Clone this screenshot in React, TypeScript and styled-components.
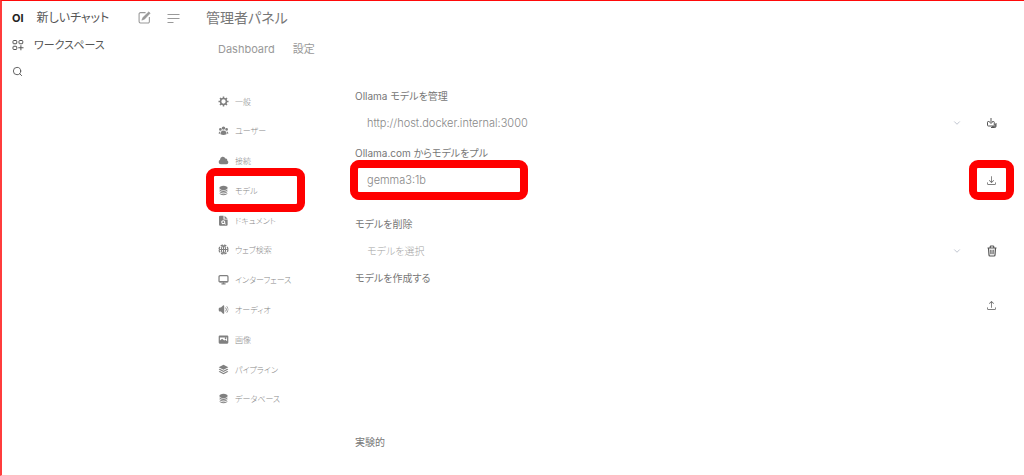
import React from "react";
import styled, { createGlobalStyle } from "styled-components";
import {
  HiArrowDownTray,
  HiArrowUpTray,
  HiCircleStack,
  HiCloud,
  HiSpeakerWave,
  HiUserGroup,
} from "react-icons/hi2";
import { ChevronDown, Search } from "lucide-react";

const GlobalStyle = createGlobalStyle`
  * { box-sizing: border-box; }
  body {
    margin: 0;
    background: #fff;
    font-family: Inter, "Noto Sans CJK JP", sans-serif;
    font-feature-settings: "palt";
    color: #777;
  }
  button, input, select { font: inherit; color: inherit; font-feature-settings: inherit; }
  svg { display: block; flex: none; }
`;

const Page = styled.div`
  display: flex;
  min-height: 100vh;
  border-top: 1px solid #ff0a0a;
  border-left: 2px solid #ff3c3c;
  border-bottom: 1px solid #ffc0c4;
`;

const Sidebar = styled.aside`
  width: 204px;
  flex: none;
  padding: 3px 26px 0 10px;
  font-size: 11px;
  color: #555;
`;

const SideRow = styled.div`
  display: flex;
  align-items: center;
  height: 27px;
`;

const SideLink = styled.a<{ $gap: number; $size: number }>`
  display: flex;
  align-items: center;
  gap: ${(p) => p.$gap}px;
  font-size: ${(p) => p.$size}px;
  line-height: 16px;
  color: inherit;
  text-decoration: none;
  white-space: nowrap;
`;

const Logo = styled.span`
  font-size: 11px;
  font-weight: 700;
  color: #222;
`;

const SideTools = styled.div`
  display: flex;
  gap: 16px;
  margin-left: auto;
  color: #999;
`;

const IconButton = styled.button`
  display: flex;
  align-items: center;
  justify-content: center;
  padding: 0;
  border: 0;
  background: none;
`;

const Main = styled.main`
  flex: 1;
  min-width: 0;
`;

const Title = styled.h1`
  margin: 0;
  padding-top: 5px;
  font-size: 14px;
  line-height: 24px;
  font-weight: 400;
  color: #777;
`;

const Tabs = styled.nav`
  display: flex;
  gap: 18px;
  padding: 9px 12px 0;
  font-size: 11px;
  line-height: 20px;

  a { color: #999; text-decoration: none; }
`;

const Body = styled.div`
  display: flex;
  padding: 28px 10px 0 12px;
`;

const SettingsNav = styled.nav`
  display: flex;
  flex-direction: column;
  justify-content: space-between;
  width: 137px;
  flex: none;
  padding: 4px 0 42px;
`;

const NavLink = styled.a`
  position: relative;
  display: flex;
  align-items: center;
  gap: 6px;
  height: 20px;
  width: 72px;
  font-size: 8px;
  font-weight: 300;
  white-space: nowrap;
  color: #888;
  text-decoration: none;

  svg { color: #808080; }
`;

const Highlight = styled.span<{ $block: number; $left: number; $right: number }>`
  position: absolute;
  top: ${(p) => -p.$block}px;
  bottom: ${(p) => -p.$block}px;
  left: ${(p) => -p.$left}px;
  right: ${(p) => -p.$right}px;
  border: 8px solid #ff0000;
  border-radius: 9px;
  pointer-events: none;
`;

const Form = styled.form`
  flex: 1;
  min-width: 0;
  font-size: 11px;
`;

const Field = styled.div<{ $after: number }>`
  margin-bottom: ${(p) => p.$after}px;
`;

const Label = styled.label`
  display: block;
  font-size: 10px;
  line-height: 18px;
  color: #777;
`;

const SectionTitle = styled.h2`
  margin: 0;
  font-size: 10px;
  font-weight: 400;
  line-height: 18px;
  color: #777;
`;

const Control = styled.div`
  display: flex;
  align-items: center;
  height: 36px;
`;

const SelectBox = styled.div`
  display: flex;
  align-items: center;
  flex: 1;
  margin-right: 7px;

  svg { color: #b4bac6; margin-left: -10px; pointer-events: none; }
`;

const Select = styled.select<{ $empty?: boolean }>`
  appearance: none;
  flex: 1;
  min-width: 0;
  height: 24px;
  padding: 0 12px;
  border: 0;
  background: transparent;
  font-size: ${(p) => (p.$empty ? 10 : 11)}px;
  font-weight: 300;
  color: ${(p) => (p.$empty ? "#a4a4a4" : "#888")};
`;

const InputBox = styled.div`
  position: relative;
  width: 168px;
  margin-right: auto;
`;

const Input = styled.input`
  display: block;
  width: 100%;
  height: 24px;
  padding: 0 12px;
  border: 0;
  outline: 0;
  background: transparent;
  font-weight: 300;
  color: #888;
`;

const ActionButton = styled(IconButton)`
  position: relative;
  width: 45px;
  height: 24px;
  margin-left: auto;
  flex: none;
  color: #555;
`;

const EditIcon = () => (
  <svg width="13" height="13" viewBox="0 0 24 24" fill="none" stroke="currentColor" strokeWidth="2">
    <path d="M14 3H4.500A2.500 2.500 0 0 0 2 5.500v14A2.500 2.500 0 0 0 4.500 22h14a2.500 2.500 0 0 0 2.500-2.500V11" />
    <path d="M20 1.500 22.500 4 12 15l-5 2 2-5Z" fill="currentColor" strokeWidth="1" />
  </svg>
);

const MenuIcon = () => (
  <svg width="13" height="14" viewBox="0 0 13 14" stroke="currentColor" fill="none">
    <path d="M0.500 3.500h12M0.500 7.500h12M0.500 11.500h6" />
  </svg>
);

const WorkspaceIcon = () => (
  <svg width="12" height="12" viewBox="0 0 24 24" fill="none" stroke="currentColor" strokeWidth="2">
    <rect x="2" y="3" width="7.500" height="6.500" rx="1.500" />
    <rect x="14" y="3" width="7.500" height="6.500" rx="1.500" />
    <rect x="2" y="14.500" width="7.500" height="6.500" rx="1.500" />
    <path d="M17.800 12.500v10M12.500 17.500H23" />
  </svg>
);

const GearIcon = () => (
  <svg width="11" height="11" viewBox="0 0 22 22" fill="none" stroke="currentColor">
    <circle cx="11" cy="11" r="5.800" strokeWidth="3" />
    <path
      strokeWidth="3"
      d="M11 1v4M11 17v4M1 11h4M17 11h4M4 4l2.800 2.800M15.200 15.200 18 18M18 4l-2.800 2.800M6.800 15.200 4 18"
    />
  </svg>
);

const DocumentIcon = () => (
  <svg width="11" height="11" viewBox="0 0 16 16" fill="currentColor">
    <path
      fillRule="evenodd"
      d="M3 1h5v5.500h6V14a1.500 1.500 0 0 1-1.500 1.500h-9.500A1.500 1.500 0 0 1 1.500 14V2.500A1.500 1.500 0 0 1 3 1ZM7.700 7.500a2.900 2.900 0 1 0 1.500 5.400l1.300 1.300 1-1-1.300-1.300a2.900 2.900 0 0 0-2.500-4.400Zm0 1.500a1.400 1.400 0 1 1 0 2.800 1.400 1.400 0 0 1 0-2.800Z"
    />
    <path d="M9.500 1 14 5.300H9.500Z" />
  </svg>
);

const GlobeIcon = () => (
  <svg width="11" height="11" viewBox="0 0 16 16" fill="none" stroke="currentColor">
    <circle cx="8" cy="8" r="6.500" strokeWidth="1.800" strokeDasharray="3.600 1.500" />
    <ellipse cx="8" cy="8" rx="3" ry="5.500" strokeWidth="1.600" />
    <path d="M1.500 8h13M8 3v10" strokeWidth="1.600" />
  </svg>
);

const MonitorIcon = () => (
  <svg width="11" height="11" viewBox="0 0 16 16" fill="none" stroke="currentColor">
    <rect x="1.500" y="2.500" width="13" height="9" rx="1.500" strokeWidth="1.800" />
    <path d="M2 11.200h12" strokeWidth="2" />
    <path d="M5 14.300h6M8 12v2" strokeWidth="1.800" />
  </svg>
);

const PhotoIcon = () => (
  <svg width="11" height="11" viewBox="0 0 16 16" fill="currentColor">
    <path
      fillRule="evenodd"
      d="M2.500 2h11A1.500 1.500 0 0 1 15 3.500v9a1.500 1.500 0 0 1-1.500 1.500h-11A1.500 1.500 0 0 1 1 12.500v-9A1.500 1.500 0 0 1 2.500 2ZM2.800 5v4.500L6 7l3 2.500 1.700-1 2.500 2V5ZM11 5.200a1.200 1.200 0 1 1 0 2.400 1.200 1.200 0 0 1 0-2.400Z"
    />
  </svg>
);

const LayersIcon = () => (
  <svg width="11" height="11" viewBox="0 0 16 16" fill="currentColor">
    <path d="M8 1 15 4.700 8 8.400 1 4.700Z" />
    <path d="M2.600 7 8 9.900 13.400 7 15 7.900 8 11.700 1 7.900Z" />
    <path d="M2.600 10.300 8 13.200l5.400-2.900 1.600.9L8 15 1 11.200Z" />
  </svg>
);

const UpdateAllIcon = () => (
  <svg width="12" height="12" viewBox="0 0 24 24" fill="none" stroke="currentColor" strokeWidth="2">
    <path d="M7 9H4.500A1.500 1.500 0 0 0 3 10.500v6A1.500 1.500 0 0 0 4.500 18H15a1.500 1.500 0 0 0 1.500-1.500v-6A1.500 1.500 0 0 0 15 9h-2.500" />
    <path d="M10 2v9M6.500 9.500 10 13l3.500-3.500" />
    <path d="M20 12v6.500a2.500 2.500 0 0 1-2.500 2.500H10M18.500 14v5.500H12" />
  </svg>
);

const TrashIcon = () => (
  <svg width="12" height="12" viewBox="0 0 24 24" fill="none" stroke="currentColor" strokeWidth="2.400">
    <path d="M3 6h18M8.500 5V3.500A1.500 1.500 0 0 1 10 2h4a1.500 1.500 0 0 1 1.500 1.500V5M5 6l1 14a2 2 0 0 0 2 2h8a2 2 0 0 0 2-2l1-14M9.700 9.500l.3 9M14.300 9.500l-.3 9" />
  </svg>
);

const navItems: { text: string; icon: React.ReactNode; marked?: boolean }[] = [
  { text: "一般", icon: <GearIcon /> },
  { text: "ユーザー", icon: <HiUserGroup size={11} /> },
  { text: "接続", icon: <HiCloud size={11} /> },
  { text: "モデル", icon: <HiCircleStack size={11} />, marked: true },
  { text: "ドキュメント", icon: <DocumentIcon /> },
  { text: "ウェブ検索", icon: <GlobeIcon /> },
  { text: "インターフェース", icon: <MonitorIcon /> },
  { text: "オーディオ", icon: <HiSpeakerWave size={11} /> },
  { text: "画像", icon: <PhotoIcon /> },
  { text: "パイプライン", icon: <LayersIcon /> },
  { text: "データベース", icon: <HiCircleStack size={11} /> },
];

export default function App() {
  return (
    <Page>
      <GlobalStyle />
      <Sidebar>
        <SideRow>
          <SideLink href="#new" $gap={13} $size={12}>
            <Logo>OI</Logo>
            新しいチャット
          </SideLink>
          <SideTools>
            <IconButton type="button" aria-label="新しいチャット">
              <EditIcon />
            </IconButton>
            <IconButton type="button" aria-label="サイドバー">
              <MenuIcon />
            </IconButton>
          </SideTools>
        </SideRow>
        <SideRow>
          <SideLink href="#workspace" $gap={10} $size={11}>
            <WorkspaceIcon />
            ワークスペース
          </SideLink>
        </SideRow>
        <SideRow>
          <IconButton type="button" aria-label="検索">
            <Search size={11} strokeWidth={2} />
          </IconButton>
        </SideRow>
      </Sidebar>

      <Main>
        <Title>管理者パネル</Title>
        <Tabs>
          <a href="#dashboard">Dashboard</a>
          <a href="#settings">設定</a>
        </Tabs>
        <Body>
          <SettingsNav>
            {navItems.map((item) => (
              <NavLink key={item.text} href="#settings">
                {item.icon}
                {item.text}
                {item.marked && <Highlight $block={12} $left={12} $right={15} />}
              </NavLink>
            ))}
          </SettingsNav>

          <Form onSubmit={(e) => e.preventDefault()}>
            <Field $after={3}>
              <Label htmlFor="server">Ollama モデルを管理</Label>
              <Control>
                <SelectBox>
                  <Select id="server">
                    <option>http://host.docker.internal:3000</option>
                  </Select>
                  <ChevronDown size={10} strokeWidth={2} />
                </SelectBox>
                <ActionButton type="button" aria-label="すべて更新">
                  <UpdateAllIcon />
                </ActionButton>
              </Control>
            </Field>

            <Field $after={17}>
              <Label htmlFor="pull">Ollama.com からモデルをプル</Label>
              <Control>
                <InputBox>
                  <Input id="pull" defaultValue="gemma3:1b" />
                  <Highlight $block={8} $left={5} $right={5} />
                </InputBox>
                <ActionButton type="button" aria-label="プル">
                  <HiArrowDownTray size={11} />
                  <Highlight $block={8} $left={0} $right={0} />
                </ActionButton>
              </Control>
            </Field>

            <Field $after={0}>
              <Label htmlFor="remove">モデルを削除</Label>
              <Control>
                <SelectBox>
                  <Select id="remove" $empty>
                    <option>モデルを選択</option>
                  </Select>
                  <ChevronDown size={10} strokeWidth={2} />
                </SelectBox>
                <ActionButton type="button" aria-label="削除">
                  <TrashIcon />
                </ActionButton>
              </Control>
            </Field>

            <Field $after={110}>
              <SectionTitle>モデルを作成する</SectionTitle>
              <Control>
                <ActionButton type="button" aria-label="作成">
                  <HiArrowUpTray size={11} />
                </ActionButton>
              </Control>
            </Field>

            <SectionTitle>実験的</SectionTitle>
          </Form>
        </Body>
      </Main>
    </Page>
  );
}
